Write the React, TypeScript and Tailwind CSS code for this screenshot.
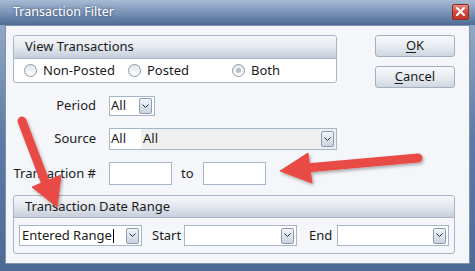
import React from 'react'

const FONT = { fontFamily: '"Noto Sans", "Open Sans", "DejaVu Sans", sans-serif' }

function DropButton({ className = '' }: { className?: string }) {
  return (
    <div
      className={`flex h-[16px] w-[13px] items-center justify-center rounded-[2px] border border-[#8c9bb3] bg-gradient-to-b from-[#f3f5f9] to-[#c9d2df] ${className}`}
    >
      <svg width="7" height="5" viewBox="0 0 7 5">
        <path d="M0.5 0.5 L3.5 3.5 L6.5 0.5" fill="none" stroke="#1e2a3a" strokeWidth="1" />
      </svg>
    </div>
  )
}

function Radio({ label, checked, disabled }: { label: string; checked?: boolean; disabled?: boolean }) {
  return (
    <label className="flex items-center gap-[6px]">
      <span className="flex h-[13px] w-[13px] items-center justify-center rounded-full border border-[#8d99aa] bg-gradient-to-b from-[#e3e7ec] to-[#fbfcfd]">
        {checked && <span className={`h-[5px] w-[5px] rounded-full ${disabled ? 'bg-[#b9bfc7]' : 'bg-[#2a5ca8]'}`} />}
      </span>
      <span className="text-[#1b1b1b]">{label}</span>
    </label>
  )
}

function Arrows() {
  return (
    <svg
      className="pointer-events-none absolute left-0 top-0"
      width="475"
      height="271"
      viewBox="0 0 475 271"
    >
      <defs>
        <filter id="sh" x="-20%" y="-20%" width="140%" height="140%">
          <feDropShadow dx="1.5" dy="2" stdDeviation="1.5" floodColor="#000" floodOpacity="0.3" />
        </filter>
      </defs>
      <g fill="#e84b45" stroke="#e84b45" filter="url(#sh)">
        <line x1="22" y1="121" x2="46" y2="184" strokeWidth="9" strokeLinecap="round" />
        <polygon points="32,187 61,175 57,207" strokeWidth="1" strokeLinejoin="round" />
        <line x1="418" y1="158" x2="306" y2="168" strokeWidth="9" strokeLinecap="round" />
        <polygon points="308,153 312,183 280,171" strokeWidth="1" strokeLinejoin="round" />
      </g>
    </svg>
  )
}

export default function App() {
  return (
    <div
      className="relative flex h-[271px] w-[475px] flex-col overflow-hidden bg-gradient-to-b from-[#9fb3cd] via-[#5d7ba4] to-[#4d6a94]"
      style={FONT}
    >
      {/* title bar */}
      <div className="flex h-[25px] shrink-0 items-center justify-between bg-gradient-to-b from-[#a8bbd4] via-[#7b94b8] to-[#4f6c97] pl-[13px] pr-[6px]">
        <span className="text-[12.5px] text-white [text-shadow:0_0_3px_rgba(20,40,70,0.7)]">Transaction Filter</span>
        <div className="mb-[2px] flex h-[16px] w-[17px] items-center justify-center rounded-[2px] border border-[#8e2a22] bg-gradient-to-b from-[#e88a7e] via-[#d6493b] to-[#c0392b]">
          <svg width="9" height="9" viewBox="0 0 9 9">
            <path d="M1 1 L8 8 M8 1 L1 8" stroke="#fff" strokeWidth="2" strokeLinecap="round" />
          </svg>
        </div>
      </div>

      {/* client area */}
      <div className="mx-[5px] mb-[7px] flex flex-1 flex-col border border-[#7f93b0] bg-[#f4f6f9] pl-[7px] pr-[12px] pt-[9px] text-[13px] text-[#1b1b1b]">
        <div className="flex">
          <div className="flex w-[324px] flex-col">
            {/* View Transactions */}
            <div className="flex h-[48px] flex-col rounded-[3px] border border-[#a8b5c8] bg-white">
              <div className="flex h-[23px] items-center rounded-t-[3px] border-b border-[#a8b5c8] bg-gradient-to-b from-[#f6f7fa] via-[#e4e8ef] to-[#c5cedb] pl-[11px]">
                View Transactions
              </div>
              <div className="flex flex-1 items-center pl-[10px]">
                <div className="w-[104px]">
                  <Radio label="Non-Posted" />
                </div>
                <div className="w-[104px]">
                  <Radio label="Posted" />
                </div>
                <Radio label="Both" checked disabled />
              </div>
            </div>

            {/* Period */}
            <div className="mt-[13px] flex h-[20px] items-center">
              <span className="w-[84px] pr-[1px] text-right">Period</span>
              <div className="ml-[12px] flex h-[20px] w-[46px] items-center justify-between border border-[#a7b5ca] bg-white pl-[1px] pr-[2px]">
                <span>All</span>
                <DropButton />
              </div>
            </div>

            {/* Source */}
            <div className="mt-[12px] flex h-[22px] items-center">
              <span className="w-[84px] pr-[1px] text-right">Source</span>
              <div className="ml-[12px] flex h-[22px] w-[228px] items-stretch border border-[#a7b5ca] bg-white">
                <span className="flex w-[31px] items-center pl-[1px]">All</span>
                <div className="flex flex-1 items-center justify-between bg-[#efefef] px-[2px]">
                  <span>All</span>
                  <DropButton />
                </div>
              </div>
            </div>

            {/* Transaction # */}
            <div className="mt-[12px] flex h-[23px] items-center">
              <span className="w-[84px] pr-[1px] text-right">Transaction #</span>
              <div className="ml-[12px] h-[23px] w-[63px] border border-[#a7b5ca] bg-white" />
              <span className="ml-[9px] w-[22px]">to</span>
              <div className="h-[23px] w-[63px] border border-[#a7b5ca] bg-white" />
            </div>
          </div>

          {/* buttons */}
          <div className="ml-[38px] flex w-[80px] flex-col gap-[9px]">
            <button className="h-[22px] rounded-[3px] border border-[#a3afc0] bg-gradient-to-b from-[#f8f9fb] via-[#e8ecf1] to-[#cfd6e0] text-[#1b1b1b]">
              <span className="underline underline-offset-2">O</span>K
            </button>
            <button className="h-[22px] rounded-[3px] border border-[#a3afc0] bg-gradient-to-b from-[#f8f9fb] via-[#e8ecf1] to-[#cfd6e0] text-[#1b1b1b]">
              <span className="underline underline-offset-2">C</span>ancel
            </button>
          </div>
        </div>

        {/* Transaction Date Range */}
        <div className="mt-[10px] flex h-[59px] w-[442px] flex-col rounded-[3px] border border-[#a8b5c8] bg-[#f4f6f9]">
          <div className="flex h-[22px] items-center rounded-t-[3px] border-b border-[#a8b5c8] bg-gradient-to-b from-[#f6f7fa] via-[#e4e8ef] to-[#c5cedb] pl-[11px]">
            Transaction Date Range
          </div>
          <div className="flex flex-1 items-center pl-[5px]">
            <div className="flex h-[21px] w-[123px] shrink-0 items-center justify-between border border-[#a7b5ca] bg-white px-[2px]">
              <span className="flex items-center">
                Entered Range<span className="ml-[1px] inline-block h-[14px] w-[1px] bg-black" />
              </span>
              <DropButton />
            </div>
            <span className="w-[42px] shrink-0 pl-[10px]">Start</span>
            <div className="flex h-[21px] w-[113px] shrink-0 items-center justify-end border border-[#a7b5ca] bg-white pr-[2px]">
              <DropButton />
            </div>
            <span className="w-[40px] shrink-0 pl-[12px]">End</span>
            <div className="flex h-[21px] w-[112px] shrink-0 items-center justify-end border border-[#a7b5ca] bg-white pr-[2px]">
              <DropButton />
            </div>
          </div>
        </div>
      </div>

      <Arrows />
    </div>
  )
}
